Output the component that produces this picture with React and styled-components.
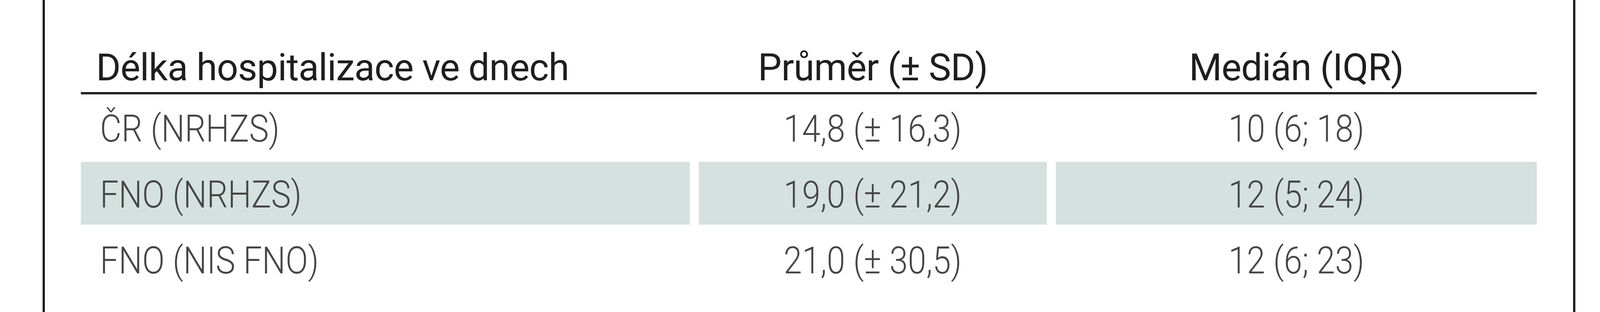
import React from 'react';
import styled, { createGlobalStyle } from 'styled-components';

const GlobalStyle = createGlobalStyle`
  body {
    margin: 0;
    background: #ffffff;
  }
`

const Frame = styled.div`
  box-sizing: border-box;
  width: 3924px;
  height: 800px;
  margin-left: 109px;
  padding: 0 93px 0 92px;
  border-left: 6px solid #222222;
  border-right: 6px solid #222222;
  overflow: hidden;
`

const Table = styled.div`
  display: grid;
  grid-template-columns: 1559px 891px 1231px;
  column-gap: 23px;
`

const HeadCell = styled.div`
  box-sizing: border-box;
  height: 236px;
  display: flex;
  align-items: flex-end;
  justify-content: ${(props) => (props.$first ? 'flex-start' : 'center')};
  padding: 0 0 13.5px ${(props) => (props.$first ? '39px' : '0')};
  font-family: Roboto, "Liberation Sans", sans-serif;
  font-size: 96.4px;
  line-height: 1;
  font-weight: 400;
  letter-spacing: -1px;
  color: #1f1e1f;
  white-space: nowrap;
`

const Rule = styled.div`
  grid-column: 1 / -1;
  height: 6px;
  background: #222222;
`

const Cell = styled.div`
  box-sizing: border-box;
  height: 161px;
  margin: 4px 0;
  display: flex;
  align-items: flex-start;
  justify-content: ${(props) => (props.$first ? 'flex-start' : 'center')};
  padding: 37px 0 0 ${(props) => (props.$first ? '49px' : '0')};
  background: ${(props) => (props.$shaded ? '#d5e1de' : 'transparent')};
  font-family: Roboto, "Liberation Sans", sans-serif;
  font-size: 96.4px;
  line-height: 1;
  font-weight: 300;
  color: #454545;
  white-space: nowrap;
`

// the source uses a condensed light face, so squeeze the text a little
const CellText = styled.span`
  display: inline-block;
  transform: scaleX(0.88);
  transform-origin: ${(props) => (props.$first ? 'left center' : 'center')};
`

const rows = [
  ['ČR (NRHZS)', '14,8 (± 16,3)', '10 (6; 18)'],
  ['FNO (NRHZS)', '19,0 (± 21,2)', '12 (5; 24)'],
  ['FNO (NIS FNO)', '21,0 (± 30,5)', '12 (6; 23)'],
];

const App = () => {
  return (
    <>
      <GlobalStyle />
      <Frame>
        <Table>
          <HeadCell $first>Délka hospitalizace ve dnech</HeadCell>
          <HeadCell>Průměr (± SD)</HeadCell>
          <HeadCell>Medián (IQR)</HeadCell>
          <Rule />
          {rows.map((row, i) =>
            row.map((text, j) => (
              <Cell key={`${i}-${j}`} $first={j === 0} $shaded={i === 1}>
                <CellText $first={j === 0}>{text}</CellText>
              </Cell>
            ))
          )}
        </Table>
      </Frame>
    </>
  );
}

export default App;
